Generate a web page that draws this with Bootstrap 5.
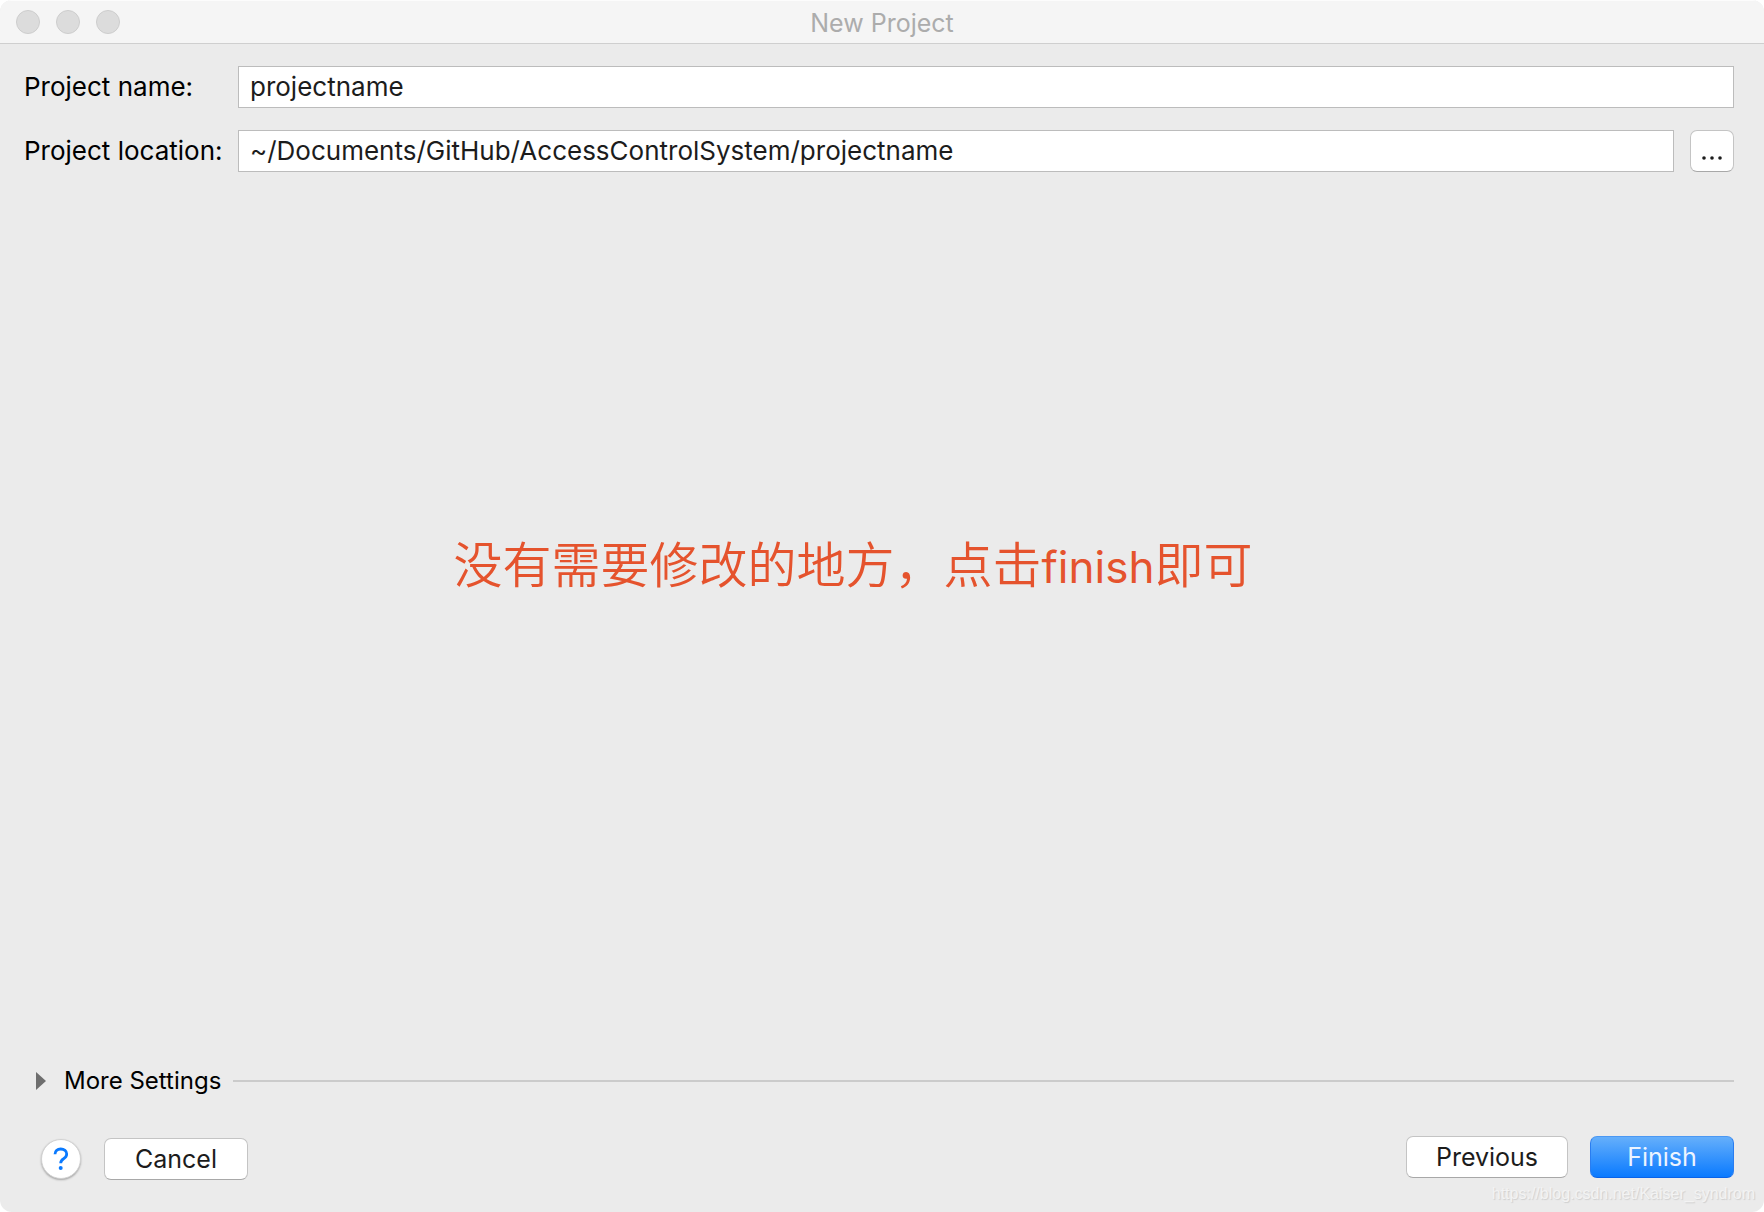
<!DOCTYPE html>
<html lang="en">
<head>
<meta charset="utf-8">
<meta name="viewport" content="width=device-width, initial-scale=1">
<title>New Project</title>
<link href="https://cdn.jsdelivr.net/npm/bootstrap@5.3.0/dist/css/bootstrap.min.css" rel="stylesheet">
<style>
  body { background: #fff; font-family: Inter, "Noto Sans CJK SC", sans-serif; font-size: 26px; line-height: 30px; color: #000; }
  .dialog-window { background: #ebebeb; border-radius: 12px; overflow: hidden; }
  .title-bar { height: 44px; background: #f5f5f5; border-bottom: 1px solid #cfcfcf; border-top: 1px solid #fcfcfc; padding: 0 16px; }
  .title-side { flex: 1 1 0; gap: 16px; }
  .title-text { padding-top: 2px; font-size: 25px; line-height: 30px; color: #acacac; }
  .window-dot { width: 24px; height: 24px; padding: 0; border: 1px solid #cdcdcd; border-radius: 50%; background: #dcdcdc; }
  .settings-form { padding: 22px 30px 0 24px; gap: 22px; }
  .field-label { width: 214px; flex: none; white-space: nowrap; }
  .form-control.path-field { height: 42px; padding: 0 11px 2px; border: 1px solid #bcbcbc; border-radius: 0; font-size: 26px; line-height: 30px; color: #1c1c1c; background: #fff; min-width: 0; }
  .btn.mac-btn { height: 42px; padding: 0; border: 1px solid #c4c4c4; border-bottom-color: #a8a8a8; border-radius: 7px; background: #fff; color: #1c1c1c; font-size: 25px; line-height: 30px; }
  .btn.browse-btn { width: 44px; flex: none; margin-left: 16px; padding-top: 14px; }
  .browse-btn svg { display: block; margin: auto; }
  .btn.wide-btn { width: 144px; }
  .btn.previous-btn { width: 162px; }
  .btn.finish-btn { color: #ecf4ff; border-color: #4b98f3 #2a7df0 #0a63e8; background: linear-gradient(#65affb, #0a7aff); }
  .btn.help-btn { width: 40px; height: 40px; padding: 0; border: 1px solid #d2d2d2; border-radius: 50%; background: #fff; color: #0a7aff; box-shadow: 0 1px 2px rgba(0,0,0,.3); }
  .help-btn svg { display: block; margin: auto; }
  .note-area { padding: 0 58px 106px 0; font-size: 49px; line-height: 60px; font-weight: 350; color: #e5532d; }
  .note-latin { font-size: 44px; font-weight: 400; }
  .more-row { padding: 0 30px 0 36px; }
  .more-toggle { border: 0; background: none; padding: 0; gap: 18px; font-size: 24px; color: #000; }
  .more-rule { height: 2px; margin-left: 12px; background: #cbcbcb; }
  .action-row { padding: 40px 30px 32px 41px; }
  .left-actions { gap: 23px; padding-top: 2px; }
  .right-actions { gap: 22px; padding-bottom: 2px; }
  .watermark-link { right: 9px; bottom: 8px; font: 16px/20px "Liberation Sans", sans-serif; color: #f3f3f3; text-shadow: 1px 1px 1px #cfcfcf; text-decoration: none; }
</style>
<script src="https://cdn.jsdelivr.net/npm/bootstrap@5.3.0/dist/js/bootstrap.bundle.min.js"></script>
</head>
<body>
<main class="dialog-window d-flex flex-column min-vh-100 position-relative">
  <header class="title-bar d-flex align-items-center">
    <div class="title-side d-flex">
      <button type="button" class="window-dot" aria-label="Close"></button>
      <button type="button" class="window-dot" aria-label="Minimize"></button>
      <button type="button" class="window-dot" aria-label="Zoom"></button>
    </div>
    <h1 class="title-text fw-normal m-0">New Project</h1>
    <div class="title-side"></div>
  </header>

  <form class="settings-form d-flex flex-column" id="projectForm">
    <div class="d-flex align-items-center">
      <label class="field-label" for="projectName">Project name:</label>
      <input class="form-control path-field flex-fill" id="projectName" type="text" value="projectname">
    </div>
    <div class="d-flex align-items-center">
      <label class="field-label" for="projectLocation">Project location:</label>
      <input class="form-control path-field flex-fill" id="projectLocation" type="text" value="~/Documents/GitHub/AccessControlSystem/projectname">
      <button type="button" class="btn mac-btn browse-btn" aria-label="Browse">
        <svg width="20" height="4" viewBox="0 0 20 4" fill="#1c1c1c"><circle cx="2" cy="2" r="1.8"/><circle cx="10" cy="2" r="1.8"/><circle cx="18" cy="2" r="1.8"/></svg>
      </button>
    </div>
  </form>

  <section class="note-area flex-grow-1 d-flex align-items-center justify-content-center" lang="zh-CN">
    <p class="m-0">没有需要修改的地方，点击<span class="note-latin">finish</span>即可</p>
  </section>

  <div class="more-row d-flex align-items-center">
    <button type="button" class="more-toggle d-flex align-items-center" aria-expanded="false">
      <svg width="10" height="18" viewBox="0 0 10 18" fill="#6e6e6e"><path d="M0 0L10 9L0 18Z"/></svg>
      <span>More Settings</span>
    </button>
    <div class="more-rule flex-grow-1"></div>
  </div>

  <footer class="action-row d-flex align-items-center justify-content-between">
    <div class="left-actions d-flex align-items-center">
      <button type="button" class="btn help-btn" aria-label="Help">
        <svg width="16" height="24" viewBox="0 0 16 24" fill="none"><path d="M2 7.2C2 3.8 4.5 2 7.7 2C11.2 2 13.7 4 13.7 7C13.7 9.4 12.4 10.7 10.3 12C8.4 13.2 7.7 14.1 7.7 16.3" stroke="#0a7aff" stroke-width="2.8"/><circle cx="7.7" cy="20.9" r="2" fill="#0a7aff"/></svg>
      </button>
      <button type="button" class="btn mac-btn wide-btn">Cancel</button>
    </div>
    <div class="right-actions d-flex align-items-center">
      <button type="button" class="btn mac-btn previous-btn">Previous</button>
      <button type="submit" form="projectForm" class="btn mac-btn wide-btn finish-btn">Finish</button>
    </div>
  </footer>
  <a class="watermark-link position-absolute" href="https://blog.csdn.net/Kaiser_syndrom">https://blog.csdn.net/Kaiser_syndrom</a>
</main>
</body>
</html>
